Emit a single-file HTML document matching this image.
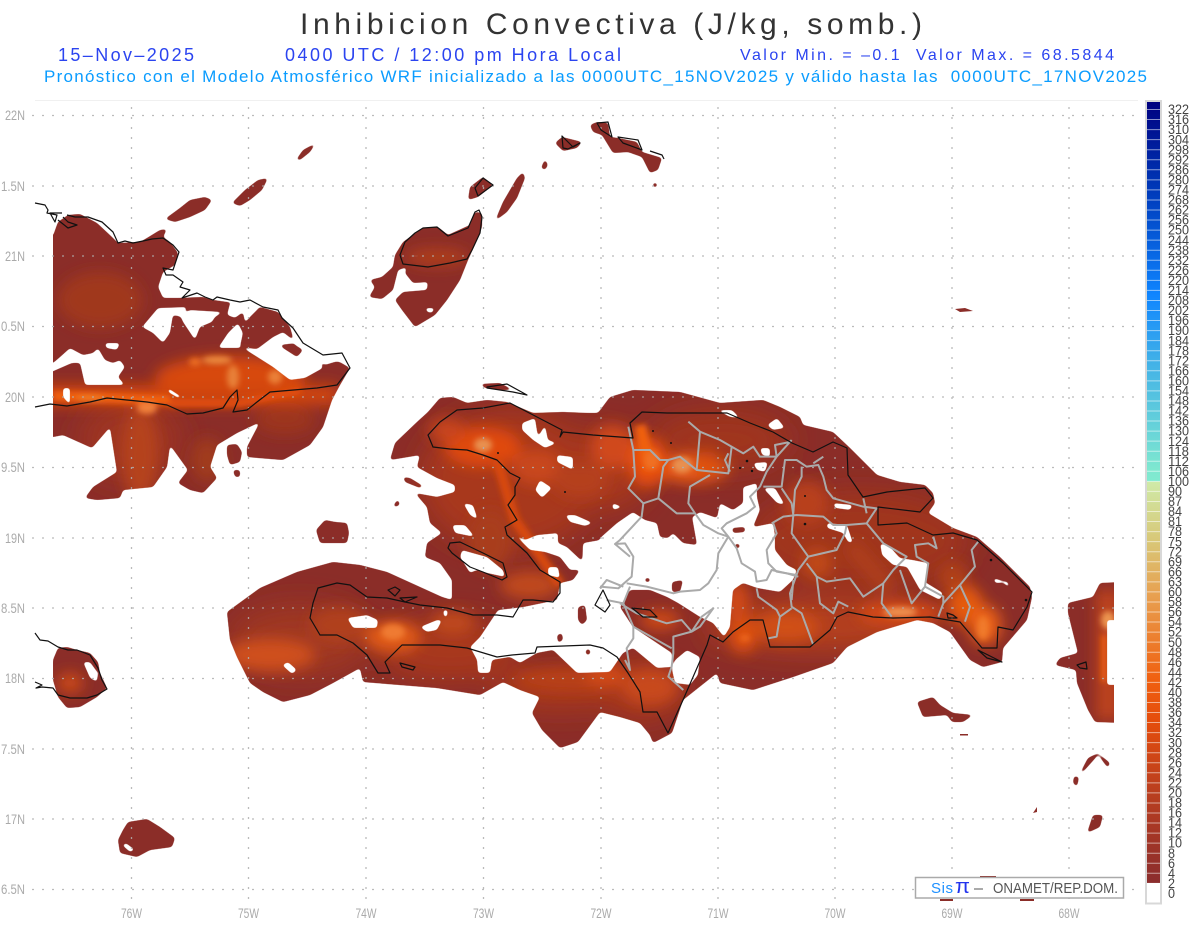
<!DOCTYPE html>
<html><head><meta charset="utf-8"><title>Inhibicion Convectiva</title>
<style>html,body{margin:0;padding:0;background:#fff}svg{display:block}text{font-family:"Liberation Sans",sans-serif;white-space:pre}.l{font-size:14px;fill:#aaa}.c{font-size:14px;fill:#444}</style></head><body>
<svg width="1200" height="927" viewBox="0 0 1200 927" xmlns="http://www.w3.org/2000/svg">
<defs>
<clipPath id="cp"><rect x="53" y="100" width="1061" height="800"/></clipPath>
<filter id="b3" x="-50%" y="-50%" width="200%" height="200%"><feGaussianBlur stdDeviation="3"/></filter>
<filter id="b7" x="-50%" y="-50%" width="200%" height="200%"><feGaussianBlur stdDeviation="7"/></filter>
<filter id="b14" x="-50%" y="-50%" width="200%" height="200%"><feGaussianBlur stdDeviation="14"/></filter>
<filter id="th" filterUnits="userSpaceOnUse" x="0" y="0" width="1200" height="927" color-interpolation-filters="sRGB"><feGaussianBlur stdDeviation="1.5"/><feComponentTransfer><feFuncR type="linear" slope="6" intercept="-2.4"/><feFuncG type="linear" slope="6" intercept="-2.4"/><feFuncB type="linear" slope="6" intercept="-2.4"/></feComponentTransfer></filter>
<linearGradient id="cb" gradientUnits="userSpaceOnUse" x1="0" y1="101" x2="0" y2="883">
<stop offset="0" stop-color="#00007f"/><stop offset=".127" stop-color="#0040c0"/><stop offset=".248" stop-color="#0f85ff"/><stop offset=".331" stop-color="#40b0e8"/><stop offset=".472" stop-color="#7fe8d0"/><stop offset=".486" stop-color="#80ead0"/><stop offset=".487" stop-color="#cfeaa8"/><stop offset=".561" stop-color="#d8c878"/><stop offset=".633" stop-color="#e8a050"/><stop offset=".74" stop-color="#f06010"/><stop offset=".792" stop-color="#e54d0c"/><stop offset=".881" stop-color="#bb3f1f"/><stop offset="1" stop-color="#8b2d2d"/>
</linearGradient>
<mask id="m" maskUnits="userSpaceOnUse" x="0" y="0" width="1200" height="927">
<g filter="url(#th)">
<rect width="1200" height="927" fill="#000"/>
<path fill="#fff" d="M53 236L58 222 68 215 80 214 97 223 113 238 118 243 140 242 147 238 160 230 167 229 163 237 170 242 178 253 175 265 163 272 158 287 163 298 180 298 203 297 213 300 227 302 243 303 260 307 278 312 290 327 300 347 320 360 340 362 350 368 340 385 332 400 323 427 310 445 283 460 247 457 247 447 260 422 237 433 217 445 210 467 217 478 203 493 190 490 178 483 188 470 170 445 167 467 153 487 123 490 120 498 97 500 85 498 93 487 117 472 110 427 92 448 63 435 53 437L40 437 40 236Z
M165 219L180 208 190 200 205 197 212 200 205 210 190 217 175 222ZM232 203L245 190 258 180 268 178 262 190 250 200 240 206ZM296 160L303 150 316 143 310 152 300 160ZM227 445L237 444 242 452 240 462 230 465 227 455ZM233 470L240 470 240 477 235 477Z
M370 280L382 277 393 267 395 255 403 242 423 228 438 227 448 235 470 225 475 212 482 213 482 227 477 240 468 260 460 280 447 300 435 315 415 327 402 310 395 300 403 292 427 290 428 282 413 283 405 273 407 267 398 270 393 290 382 299 369 297 375 287ZM468 200L470 187 483 177 493 185 478 197ZM495 221L503 202 517 178 523 172 525 178 517 198 507 212ZM541 168L545 159 548 165 545 170ZM555 143L562 137 582 142 577 148 563 151ZM590 125L597 122 608 123 610 137 618 138 637 142 642 152 662 158 658 170 650 173 642 157 628 152 613 153 602 135 593 132ZM652 185L655 182 658 185 655 188Z
M390 460L395 443 417 422 428 412 440 398 453 397 467 403 487 400 507 402 533 413 563 412 587 413 598 413 610 397 633 390 680 392 720 403 763 400 780 407 800 417 803 425 833 432 850 448 877 475 900 482 925 485 933 493 935 503 928 513 953 528 977 537 1000 557 1030 587 1032 597 1027 620 1003 648 1002 662 983 667 970 660 950 632 933 623 917 620 877 632 847 647 833 663 793 677 753 690 720 683 717 673 683 700 672 733 653 743 650 735 640 723 620 717 600 712 578 742 560 748 542 730 532 713 540 697 520 690 503 682 480 695 437 688 363 682 360 668 333 683 310 695 283 702 263 692 250 683 237 657 230 640 227 612 260 588 297 572 333 562 360 565 387 572 420 587 442 597 452 600 452 580 440 563 425 557 427 543 442 533 430 523 427 507 415 493 437 497 455 492 455 485 437 478 417 467 420 455Z
M480 384L500 383 513 390 500 390 485 388ZM403 477L410 478 423 486 420 488 405 482ZM393 506L398 499 400 505 395 507ZM325 520L335 522 347 523 349 533 347 543 320 543 316 530Z
M1100 583L1125 582 1125 723 1095 722 1088 710 1077 683 1076 670 1055 665 1060 658 1078 653 1068 613 1068 603 1093 597ZM1080 773L1088 758 1098 753 1110 763 1108 768 1098 755 1083 772ZM1074 776L1079 777 1077 787 1073 783ZM1087 833L1093 815 1103 815 1100 827ZM1105 817L1108 818 1107 823Z
M917 702L933 697 940 705 953 713 973 715 963 722 952 722 947 715 923 717Z
M58 648L67 647 77 650 90 653 98 662 100 673 107 688 97 697 80 707 67 708 58 697 53 680 53 660ZM128 822L147 819 160 827 175 838 172 847 150 850 137 857 120 853 118 840 123 830Z"/>
<g fill="#000">
<path d="M142 327L158 308 187 307 182 317 173 315 170 333 163 343 153 333ZM190 310L223 312 215 317 212 322 200 327 195 340 183 322 180 315ZM227 315L230 303 260 307 250 317 245 323 243 312 235 318ZM228 333L238 323 243 333 240 347 257 349 273 337 283 332 297 343 280 345 283 348 297 357 303 350 317 355 323 368 305 378 290 380 273 367 243 348 218 348ZM290 327L305 345 325 356 340 354 350 368 338 361 325 365 303 350 295 345ZM53 363L60 357 70 348 83 355 93 353 98 348 105 360 113 363 120 360 125 367 118 377 125 385 113 385 85 385 80 363 72 363 40 377 40 363ZM105 343L120 343 117 350 106 348ZM62 300L70 290 65 300ZM63 388L70 388 70 405 63 397ZM168 388L182 397 178 398 168 392Z"/>
<path d="M407 255H422L420 257H408ZM425 308L435 308 432 313 427 312ZM462 550L487 557 503 570 505 577 487 573 477 570 470 573 460 557ZM557 455L573 457 573 470 557 462ZM522 423L535 418 538 437 545 425 548 440 557 443 545 448 533 440 522 430ZM535 490L540 480 552 488 542 498ZM565 515L575 515 593 523 585 526 570 522ZM463 503L473 505 478 520 470 515ZM452 525L465 525 475 537 455 533ZM513 533L525 540 537 535 558 533 558 543 567 547 583 562 582 570 570 570 560 557 545 552 530 550ZM548 567L558 567 560 578 548 575ZM447 580L452 580 450 598 447 598ZM347 618L367 615 378 620 377 628 353 628ZM420 627L437 620 442 620 437 630 427 632ZM282 665L288 662 297 670 292 674ZM443 610L448 610 447 617 444 617Z"/>
<path d="M600 540L583 543 582 567 573 580 560 583 557 600 523 607 498 610 480 637 470 647 477 660 478 673 490 673 492 660 510 657 520 663 537 653 553 650 577 673 610 672 623 653 633 648 657 668 672 667 672 653 633 627 620 607 630 590 650 590 667 597 678 603 700 617 713 623 724 637 730 627 733 590 743 583 757 588 780 592 793 580 797 570 787 565 775 550 775 535 773 523 753 527 760 510 757 497 757 483 743 487 743 503 733 510 720 503 717 518 700 512 692 517 697 545 683 543 673 533 668 538 660 537 657 523 645 520 633 512 617 523 600 538Z"/>
<path d="M675 660L687 650 700 657 698 675 690 685 675 683 672 670ZM833 503L853 505 850 510 835 508ZM827 523L847 525 853 543 848 542 843 533 827 528ZM880 543L890 547 900 558 913 560 928 563 925 582 943 593 940 600 920 590 907 567 893 565 882 555ZM760 448L770 448 770 457 762 455ZM753 463L768 462 765 472 757 470ZM763 488L775 488 785 505 777 503ZM993 578L1000 580 1008 582 1010 588 1003 583 995 583ZM767 425L777 418 785 428 773 430ZM717 410L732 410 740 418 730 417ZM612 503L623 507 613 510ZM1107 620L1130 620 1130 685 1107 685 1107 677 1107 633ZM83 662L90 662 98 673 97 682 90 678ZM122 845L126 843 135 850 130 852Z"/>
</g>
<path fill="#fff" d="M578 607L585 605 587 620 582 625 578 620ZM557 635L562 633 563 640 558 643ZM588 648L591 652 588 656 585 652ZM732 528L745 527 745 532 733 533ZM737 543L741 546 737 549 734 546ZM645 578L650 578 650 582 645 582ZM672 582L683 580 680 592 672 592Z"/>
</g>
</mask>
</defs>
<rect width="1200" height="927" fill="#fff"/>
<text x="300" y="34" font-size="30" fill="#333" textLength="622">Inhibicion Convectiva (J/kg, somb.)</text>
<text x="58" y="61" font-size="18" fill="#2b44f0" textLength="136">15–Nov–2025</text>
<text x="285" y="61" font-size="18" fill="#2b44f0" textLength="336">0400 UTC / 12:00 pm Hora Local</text>
<text x="740" y="60" font-size="16" fill="#2b44f0" textLength="374">Valor Min. = –0.1  Valor Max. = 68.5844</text>
<text x="44" y="82" font-size="17" fill="#0a9cff" textLength="1103">Pronóstico con el Modelo Atmosférico WRF inicializado a las 0000UTC_15NOV2025 y válido hasta las  0000UTC_17NOV2025</text>
<line x1="35" y1="100.5" x2="1138" y2="100.5" stroke="#f0f0f0"/>
<g clip-path="url(#cp)"><g mask="url(#m)">
<rect x="53" width="1061" height="927" fill="#8b2d28"/>
<g filter="url(#b14)">
<ellipse cx="510" cy="480" rx="90" ry="70" fill="#a8391d"/><ellipse cx="600" cy="470" rx="50" ry="40" fill="#a8391d"/><ellipse cx="720" cy="440" rx="70" ry="30" fill="#a0361f"/><ellipse cx="860" cy="540" rx="110" ry="50" fill="#a0361f"/><ellipse cx="820" cy="625" rx="115" ry="25" fill="#b5401a"/><ellipse cx="300" cy="640" rx="70" ry="35" fill="#a03820"/><ellipse cx="450" cy="650" rx="70" ry="30" fill="#a8391d"/><ellipse cx="130" cy="440" rx="50" ry="40" fill="#9f3620"/><ellipse cx="640" cy="690" rx="45" ry="30" fill="#a8391d"/><ellipse cx="560" cy="690" rx="70" ry="20" fill="#a8391d"/>
</g>
<g filter="url(#b7)">
<ellipse cx="100" cy="300" rx="42" ry="28" fill="#a0381f"/><ellipse cx="230" cy="378" rx="75" ry="22" fill="#d8480f"/><rect x="40" y="385" width="298" height="20" fill="#d0440f"/><ellipse cx="140" cy="455" rx="18" ry="48" fill="#b5421a"/><ellipse cx="207" cy="460" rx="16" ry="22" fill="#a03a1e"/><ellipse cx="285" cy="420" rx="30" ry="14" fill="#9d351f"/>
<ellipse cx="437" cy="257" rx="32" ry="9" fill="#ae3e1c"/>
<ellipse cx="483" cy="447" rx="38" ry="20" fill="#e04a10"/><ellipse cx="447" cy="430" rx="18" ry="12" fill="#c8451a"/><ellipse cx="537" cy="467" rx="25" ry="18" fill="#c8461a"/><ellipse cx="613" cy="447" rx="22" ry="22" fill="#d04a1a"/><ellipse cx="580" cy="480" rx="28" ry="18" fill="#b5401c"/><ellipse cx="490" cy="540" rx="22" ry="30" fill="#a93c1d"/>
<ellipse cx="393" cy="637" rx="28" ry="16" fill="#e05a15"/><ellipse cx="270" cy="655" rx="45" ry="16" fill="#cf4f1a"/><ellipse cx="453" cy="623" rx="22" ry="12" fill="#c0481a"/><ellipse cx="573" cy="680" rx="60" ry="12" fill="#b84018"/><ellipse cx="340" cy="625" rx="30" ry="18" fill="#b0401a"/><ellipse cx="530" cy="585" rx="30" ry="14" fill="#c0481a"/>
<ellipse cx="692" cy="468" rx="36" ry="15" fill="#e85a12"/><ellipse cx="648" cy="462" rx="20" ry="25" fill="#e85010"/><ellipse cx="707" cy="463" rx="12" ry="12" fill="#dd5010"/><ellipse cx="807" cy="503" rx="22" ry="22" fill="#b8401a"/><ellipse cx="900" cy="613" rx="42" ry="12" fill="#d44a15"/><ellipse cx="965" cy="605" rx="18" ry="20" fill="#e55a10"/><ellipse cx="985" cy="625" rx="16" ry="20" fill="#ea6012"/><ellipse cx="787" cy="627" rx="32" ry="15" fill="#d05015"/><ellipse cx="743" cy="635" rx="14" ry="18" fill="#dd5010"/><ellipse cx="737" cy="603" rx="12" ry="22" fill="#d04a15"/><ellipse cx="650" cy="687" rx="28" ry="18" fill="#c8481a"/><ellipse cx="605" cy="675" rx="20" ry="12" fill="#d04a15"/><ellipse cx="817" cy="563" rx="15" ry="15" fill="#c04a18"/><ellipse cx="953" cy="577" rx="15" ry="15" fill="#b04018"/><ellipse cx="660" cy="620" rx="20" ry="10" fill="#cc4a16"/>
<ellipse cx="70" cy="683" rx="13" ry="10" fill="#cc4a18"/>
<rect x="1096" y="590" width="24" height="130" fill="#bc431a"/>
<path d="M850 545L890 590" stroke="#b0401c" stroke-width="14" fill="none"/>
</g>
<g filter="url(#b3)" fill="none">
<path d="M53 396L170 400" stroke="#f06010" stroke-width="10"/><path d="M170 403H240L300 390" stroke="#e24e10" stroke-width="8"/>
<path d="M497 460L515 520 560 585" stroke="#d84a10" stroke-width="10"/>
<path d="M1104 635V682" stroke="#f06010" stroke-width="5"/>
<path d="M640 425L650 470" stroke="#f06010" stroke-width="12"/>
<g stroke="none"><ellipse cx="147" cy="408" rx="10" ry="6" fill="#f0803a"/><ellipse cx="90" cy="398" rx="14" ry="3" fill="#f07a20"/><ellipse cx="217" cy="360" rx="15" ry="4" fill="#ec8a3c"/><ellipse cx="233" cy="377" rx="6" ry="12" fill="#e88038"/><ellipse cx="275" cy="377" rx="7" ry="7" fill="#ea8038"/><ellipse cx="195" cy="362" rx="6" ry="4" fill="#ee7020"/>
<ellipse cx="483" cy="445" rx="9" ry="7" fill="#e89050"/><ellipse cx="393" cy="632" rx="12" ry="8" fill="#ef7a30"/><ellipse cx="682" cy="465" rx="10" ry="8" fill="#e89050"/><ellipse cx="652" cy="460" rx="8" ry="10" fill="#f07020"/><ellipse cx="900" cy="612" rx="17" ry="5" fill="#ee9050"/><ellipse cx="983" cy="628" rx="6" ry="12" fill="#f07a2a"/><ellipse cx="745" cy="638" rx="5" ry="3" fill="#f06a20"/><ellipse cx="1108" cy="620" rx="7" ry="9" fill="#ec9450"/></g>
</g>
</g></g>
<path fill="#8b2d28" d="M980 876H996V878H980ZM940 899H953V901H940ZM1020 899H1034V901H1020ZM960 734H968V735.5H960ZM955 309L965 308 973 311 960 312ZM1033 813L1037 807 1037 812Z"/>
<g stroke="#b0b0b0" stroke-width="1.3" stroke-dasharray="2 8" fill="none" opacity=".85">
<path d="M32 115.5H1140M32 186H1140M32 256H1140M32 326.5H1140M32 397H1140M32 467.5H1140M32 538H1140M32 608H1140M32 678.5H1140M32 749H1140M32 819H1140M32 889.5H1140"/>
<path d="M131.5 107V904M248.5 107V904M366 107V904M483.5 107V904M601 107V904M718 107V904M835 107V904M952 107V904M1069 107V904"/>
</g>
<g fill="none" stroke="#aaa" stroke-width="6" stroke-linejoin="round" transform="translate(600,400) scale(.3333)">
<path d="M85 80L100 150 105 230 85 265 130 310 125 350 60 420 45 432 75 430 100 470 95 530 55 565 0 560M20 600L70 610 90 560M70 610L100 680 100 715 80 745 90 810 75 780"/>
<path d="M130 310L175 295 230 340 285 340 310 375 355 400 385 410 410 445 425 490 465 515 470 545 500 540 515 510 560 520 595 530M175 295L190 200 205 180 180 180 150 150 100 150M265 65L300 95 360 120 430 160 460 140 480 170 530 170 575 120M300 95L290 210 385 220 395 140M205 180L240 170 290 210M330 225L270 260 265 310 285 340M385 160L375 180 390 215M480 260L500 215 530 170 525 135 575 125M480 260L450 290 465 320 440 340 380 370 365 385 385 410 355 460 350 510 325 550 300 570 240 575 220 580 140 560 80 550"/>
<path d="M515 370L550 350 590 345 670 350 700 375 740 375 800 370 830 325 790 320 700 295 680 270 670 230 655 195 620 200 590 180 555 180 545 260 490 260M545 265L575 310 580 345 575 400 625 470 710 450 735 400 740 375M625 470L595 510 570 580 575 620 605 640 640 735M575 625L540 650 530 710 505 715M520 370L530 400 500 450 505 490 530 515 590 525M620 490L650 530 680 545 750 535 790 590 850 550 880 510 920 470 850 430 800 370M650 530L660 610 700 640 715 605 745 620M850 550L845 610 875 650M900 510L935 610 975 560 985 490 950 470 945 435 985 430 1010 445 1000 410M975 560L1030 590 1030 610 1015 650M1030 610L1080 555 1110 620 1095 665M1080 555L1125 500 1115 450 1135 425M800 340L790 295M470 565L475 590 530 630 540 650M580 540L575 600M605 200V230L585 270 580 340M640 190L670 170"/>
<path d="M60 610L110 640 200 670 245 660 275 695 300 680 340 625 305 650 275 695 220 710 220 760 215 800 205 830 250 870M100 680L215 745M70 560L20 540 0 565M45 432L90 470"/>
</g>
<g fill="none" stroke="#111" stroke-width="1.2" stroke-linejoin="round">
<path d="M35 203L45 205 48 210 47 213 57 215 55 222 50 213 62 213M67 215L75 217 88 217 102 222 113 232 118 243 125 241 133 243 143 241 152 239 163 238 173 245 179 252 173 270 163 268 166 275 173 275 183 282 180 287 190 290 182 298 197 293 205 297 213 300 217 297 230 300 240 302 250 300 263 307 278 310 282 318 293 328 303 343 323 355 342 353 350 368 337 385 317 388 270 392 257 402 247 410 233 412 238 400 237 390 230 397 223 408 203 413 187 414 167 405 147 402 107 398 90 402 67 406 50 404 35 407M58 220L68 228 77 225 68 222 63 217"/>
<path d="M400 255L405 242 415 233 423 228 437 227 448 236 468 228 475 212 479 210 482 217 480 233 472 250 467 259 450 263 428 267 403 264ZM475 188L483 178 493 185 478 196ZM562 136L573 147 580 143 568 149 563 148ZM597 123L608 122 612 137 601 130ZM618 137L638 140 642 150 623 143ZM650 151L662 155 664 159"/>
<path d="M440 422L428 435 433 447 450 449 467 450 483 455 497 460 510 473 520 478 515 487 515 495 508 505 517 520 505 527 507 535 527 553 540 570 560 582 560 593 553 602 533 600 523 600 513 617 497 615 473 615 447 608 420 605 405 602 387 598 367 597 350 585 337 583 318 588 313 603 310 618 320 635 337 635 353 643 367 655 378 673 390 673 385 662 402 645 420 645 440 645 467 648 497 657 512 655 535 653 537 647 590 645 603 648 617 657 628 673 640 692 643 712 657 712 668 733 683 700 707 645 710 635 723 642 733 632 750 620 763 620 770 647 810 647 830 630 837 617 848 612 873 617 893 618 930 617 960 622 977 642 982 648 997 648 998 627 1013 630 1027 607 1032 592 1003 563 977 540 953 533 933 535 907 523 878 525 878 507 920 512 933 498 925 488 887 492 863 497 848 475 847 448 833 442 813 452 792 443 773 432 750 423 727 413 667 413 642 412 630 423 633 438 593 435 563 432 560 437 562 430 537 417 510 403 483 408 457 410 440 422"/>
<path d="M450 543L460 542 483 553 503 563 507 577 502 580 483 572 470 567 452 553 448 548ZM487 387L507 384 527 395 513 392 487 388ZM400 663L415 667 413 670 402 667ZM388 590L395 587 400 590 395 596ZM400 598L417 597 405 602ZM1077 665L1086 662 1087 669 1080 668ZM978 650L1002 662 987 658ZM947 613L953 615 957 618 948 618ZM632 608L650 610 657 617 643 617ZM603 590L610 605 605 612 595 605ZM35 633L40 640 48 641 58 647 68 650 77 650 90 655 98 668 102 680 107 689 97 695 87 698 70 698 58 695 53 688 42 687 36 688 42 685 35 682"/>
</g>
<g fill="#111"><circle cx="653" cy="431" r="1"/><circle cx="671" cy="443" r="1"/><circle cx="747" cy="461" r="1.3"/><circle cx="740" cy="468" r="1"/><circle cx="752" cy="471" r="1.2"/><circle cx="805" cy="496" r="1"/><circle cx="805" cy="524" r="1.3"/><circle cx="991" cy="560" r="1.3"/><circle cx="1026" cy="600" r="1.3"/><circle cx="565" cy="492" r="1"/><circle cx="498" cy="453" r="1"/></g>
<rect x="1146" y="101" width="15" height="782" fill="url(#cb)"/>
<path d="M1153.5 109V883" stroke="#fff" stroke-opacity=".55" stroke-width="15" stroke-dasharray="1 9.05" fill="none"/>
<rect x="1146" y="101" width="15" height="802.5" fill="none" stroke="#d8d8d8" stroke-width="2"/>
<g>
<text class="c" x="1168" y="898" textLength="7" lengthAdjust="spacingAndGlyphs">0</text><text class="c" x="1168" y="888" textLength="7" lengthAdjust="spacingAndGlyphs">2</text><text class="c" x="1168" y="878" textLength="7" lengthAdjust="spacingAndGlyphs">4</text><text class="c" x="1168" y="868" textLength="7" lengthAdjust="spacingAndGlyphs">6</text><text class="c" x="1168" y="858" textLength="7" lengthAdjust="spacingAndGlyphs">8</text>
<text class="c" x="1168" y="847.5" textLength="14" lengthAdjust="spacingAndGlyphs">10</text><text class="c" x="1168" y="837.4" textLength="14" lengthAdjust="spacingAndGlyphs">12</text><text class="c" x="1168" y="827.4" textLength="14" lengthAdjust="spacingAndGlyphs">14</text><text class="c" x="1168" y="817.6" textLength="14" lengthAdjust="spacingAndGlyphs">16</text><text class="c" x="1168" y="807.5" textLength="14" lengthAdjust="spacingAndGlyphs">18</text><text class="c" x="1168" y="797.5" textLength="14" lengthAdjust="spacingAndGlyphs">20</text><text class="c" x="1168" y="787.5" textLength="14" lengthAdjust="spacingAndGlyphs">22</text><text class="c" x="1168" y="777.4" textLength="14" lengthAdjust="spacingAndGlyphs">24</text><text class="c" x="1168" y="767.4" textLength="14" lengthAdjust="spacingAndGlyphs">26</text><text class="c" x="1168" y="757.3" textLength="14" lengthAdjust="spacingAndGlyphs">28</text><text class="c" x="1168" y="747.3" textLength="14" lengthAdjust="spacingAndGlyphs">30</text><text class="c" x="1168" y="737.2" textLength="14" lengthAdjust="spacingAndGlyphs">32</text><text class="c" x="1168" y="727.2" textLength="14" lengthAdjust="spacingAndGlyphs">34</text><text class="c" x="1168" y="717.1" textLength="14" lengthAdjust="spacingAndGlyphs">36</text><text class="c" x="1168" y="707.1" textLength="14" lengthAdjust="spacingAndGlyphs">38</text><text class="c" x="1168" y="697" textLength="14" lengthAdjust="spacingAndGlyphs">40</text><text class="c" x="1168" y="687" textLength="14" lengthAdjust="spacingAndGlyphs">42</text><text class="c" x="1168" y="676.9" textLength="14" lengthAdjust="spacingAndGlyphs">44</text><text class="c" x="1168" y="666.9" textLength="14" lengthAdjust="spacingAndGlyphs">46</text><text class="c" x="1168" y="656.8" textLength="14" lengthAdjust="spacingAndGlyphs">48</text><text class="c" x="1168" y="646.8" textLength="14" lengthAdjust="spacingAndGlyphs">50</text><text class="c" x="1168" y="636.7" textLength="14" lengthAdjust="spacingAndGlyphs">52</text><text class="c" x="1168" y="626.7" textLength="14" lengthAdjust="spacingAndGlyphs">54</text><text class="c" x="1168" y="616.6" textLength="14" lengthAdjust="spacingAndGlyphs">56</text><text class="c" x="1168" y="606.6" textLength="14" lengthAdjust="spacingAndGlyphs">58</text><text class="c" x="1168" y="596.5" textLength="14" lengthAdjust="spacingAndGlyphs">60</text><text class="c" x="1168" y="586.5" textLength="14" lengthAdjust="spacingAndGlyphs">63</text><text class="c" x="1168" y="576.4" textLength="14" lengthAdjust="spacingAndGlyphs">66</text><text class="c" x="1168" y="566.4" textLength="14" lengthAdjust="spacingAndGlyphs">69</text><text class="c" x="1168" y="556.3" textLength="14" lengthAdjust="spacingAndGlyphs">72</text><text class="c" x="1168" y="546.3" textLength="14" lengthAdjust="spacingAndGlyphs">75</text><text class="c" x="1168" y="536.2" textLength="14" lengthAdjust="spacingAndGlyphs">78</text><text class="c" x="1168" y="526.2" textLength="14" lengthAdjust="spacingAndGlyphs">81</text><text class="c" x="1168" y="516.1" textLength="14" lengthAdjust="spacingAndGlyphs">84</text><text class="c" x="1168" y="506.1" textLength="14" lengthAdjust="spacingAndGlyphs">87</text><text class="c" x="1168" y="496" textLength="14" lengthAdjust="spacingAndGlyphs">90</text>
<text class="c" x="1168" y="486" textLength="21" lengthAdjust="spacingAndGlyphs">100</text><text class="c" x="1168" y="475.9" textLength="21" lengthAdjust="spacingAndGlyphs">106</text><text class="c" x="1168" y="465.9" textLength="21" lengthAdjust="spacingAndGlyphs">112</text><text class="c" x="1168" y="455.8" textLength="21" lengthAdjust="spacingAndGlyphs">118</text><text class="c" x="1168" y="445.8" textLength="21" lengthAdjust="spacingAndGlyphs">124</text><text class="c" x="1168" y="435.7" textLength="21" lengthAdjust="spacingAndGlyphs">130</text><text class="c" x="1168" y="425.7" textLength="21" lengthAdjust="spacingAndGlyphs">136</text><text class="c" x="1168" y="415.6" textLength="21" lengthAdjust="spacingAndGlyphs">142</text><text class="c" x="1168" y="405.6" textLength="21" lengthAdjust="spacingAndGlyphs">148</text><text class="c" x="1168" y="395.5" textLength="21" lengthAdjust="spacingAndGlyphs">154</text><text class="c" x="1168" y="385.5" textLength="21" lengthAdjust="spacingAndGlyphs">160</text><text class="c" x="1168" y="375.4" textLength="21" lengthAdjust="spacingAndGlyphs">166</text><text class="c" x="1168" y="365.4" textLength="21" lengthAdjust="spacingAndGlyphs">172</text><text class="c" x="1168" y="355.3" textLength="21" lengthAdjust="spacingAndGlyphs">178</text><text class="c" x="1168" y="345.3" textLength="21" lengthAdjust="spacingAndGlyphs">184</text><text class="c" x="1168" y="335.2" textLength="21" lengthAdjust="spacingAndGlyphs">190</text><text class="c" x="1168" y="325.2" textLength="21" lengthAdjust="spacingAndGlyphs">196</text><text class="c" x="1168" y="315.1" textLength="21" lengthAdjust="spacingAndGlyphs">202</text><text class="c" x="1168" y="305.1" textLength="21" lengthAdjust="spacingAndGlyphs">208</text><text class="c" x="1168" y="295" textLength="21" lengthAdjust="spacingAndGlyphs">214</text><text class="c" x="1168" y="285" textLength="21" lengthAdjust="spacingAndGlyphs">220</text><text class="c" x="1168" y="274.9" textLength="21" lengthAdjust="spacingAndGlyphs">226</text><text class="c" x="1168" y="264.9" textLength="21" lengthAdjust="spacingAndGlyphs">232</text><text class="c" x="1168" y="254.8" textLength="21" lengthAdjust="spacingAndGlyphs">238</text><text class="c" x="1168" y="244.8" textLength="21" lengthAdjust="spacingAndGlyphs">244</text><text class="c" x="1168" y="234.7" textLength="21" lengthAdjust="spacingAndGlyphs">250</text><text class="c" x="1168" y="224.7" textLength="21" lengthAdjust="spacingAndGlyphs">256</text><text class="c" x="1168" y="214.6" textLength="21" lengthAdjust="spacingAndGlyphs">262</text><text class="c" x="1168" y="204.6" textLength="21" lengthAdjust="spacingAndGlyphs">268</text><text class="c" x="1168" y="194.5" textLength="21" lengthAdjust="spacingAndGlyphs">274</text><text class="c" x="1168" y="184.5" textLength="21" lengthAdjust="spacingAndGlyphs">280</text><text class="c" x="1168" y="174.4" textLength="21" lengthAdjust="spacingAndGlyphs">286</text><text class="c" x="1168" y="164.4" textLength="21" lengthAdjust="spacingAndGlyphs">292</text><text class="c" x="1168" y="154.3" textLength="21" lengthAdjust="spacingAndGlyphs">298</text><text class="c" x="1168" y="144.3" textLength="21" lengthAdjust="spacingAndGlyphs">304</text><text class="c" x="1168" y="134.2" textLength="21" lengthAdjust="spacingAndGlyphs">310</text><text class="c" x="1168" y="124.2" textLength="21" lengthAdjust="spacingAndGlyphs">316</text><text class="c" x="1168" y="114.1" textLength="21" lengthAdjust="spacingAndGlyphs">322</text>
</g>
<text class="l" x="5" y="120" textLength="20" lengthAdjust="spacingAndGlyphs">22N</text><text class="l" x="1" y="191" textLength="24" lengthAdjust="spacingAndGlyphs">1.5N</text><text class="l" x="5" y="261" textLength="20" lengthAdjust="spacingAndGlyphs">21N</text><text class="l" x="1" y="331" textLength="24" lengthAdjust="spacingAndGlyphs">0.5N</text><text class="l" x="5" y="402" textLength="20" lengthAdjust="spacingAndGlyphs">20N</text><text class="l" x="1" y="472" textLength="24" lengthAdjust="spacingAndGlyphs">9.5N</text><text class="l" x="5" y="543" textLength="20" lengthAdjust="spacingAndGlyphs">19N</text><text class="l" x="1" y="613" textLength="24" lengthAdjust="spacingAndGlyphs">8.5N</text><text class="l" x="5" y="683" textLength="20" lengthAdjust="spacingAndGlyphs">18N</text><text class="l" x="1" y="754" textLength="24" lengthAdjust="spacingAndGlyphs">7.5N</text><text class="l" x="5" y="824" textLength="20" lengthAdjust="spacingAndGlyphs">17N</text><text class="l" x="1" y="894" textLength="24" lengthAdjust="spacingAndGlyphs">6.5N</text>
<text class="l" x="121" y="918" textLength="21" lengthAdjust="spacingAndGlyphs">76W</text><text class="l" x="238" y="918" textLength="21" lengthAdjust="spacingAndGlyphs">75W</text><text class="l" x="355.5" y="918" textLength="21" lengthAdjust="spacingAndGlyphs">74W</text><text class="l" x="473" y="918" textLength="21" lengthAdjust="spacingAndGlyphs">73W</text><text class="l" x="590.5" y="918" textLength="21" lengthAdjust="spacingAndGlyphs">72W</text><text class="l" x="707.5" y="918" textLength="21" lengthAdjust="spacingAndGlyphs">71W</text><text class="l" x="824.5" y="918" textLength="21" lengthAdjust="spacingAndGlyphs">70W</text><text class="l" x="941.5" y="918" textLength="21" lengthAdjust="spacingAndGlyphs">69W</text><text class="l" x="1058.5" y="918" textLength="21" lengthAdjust="spacingAndGlyphs">68W</text>
<rect x="915.5" y="877.5" width="208" height="20.5" fill="#fff" stroke="#aaa" stroke-width="1.5"/>
<text x="931" y="893" font-size="15" fill="#1e90ff" textLength="22">Sis</text>
<text x="955" y="893" font-size="20" fill="#2233ee" textLength="15" lengthAdjust="spacingAndGlyphs">π</text>
<text x="974" y="893" font-size="15" fill="#555" textLength="9" lengthAdjust="spacingAndGlyphs">–</text>
<text x="993" y="893" font-size="15" fill="#555" textLength="125" lengthAdjust="spacingAndGlyphs">ONAMET/REP.DOM.</text>
</svg>
</body></html>
